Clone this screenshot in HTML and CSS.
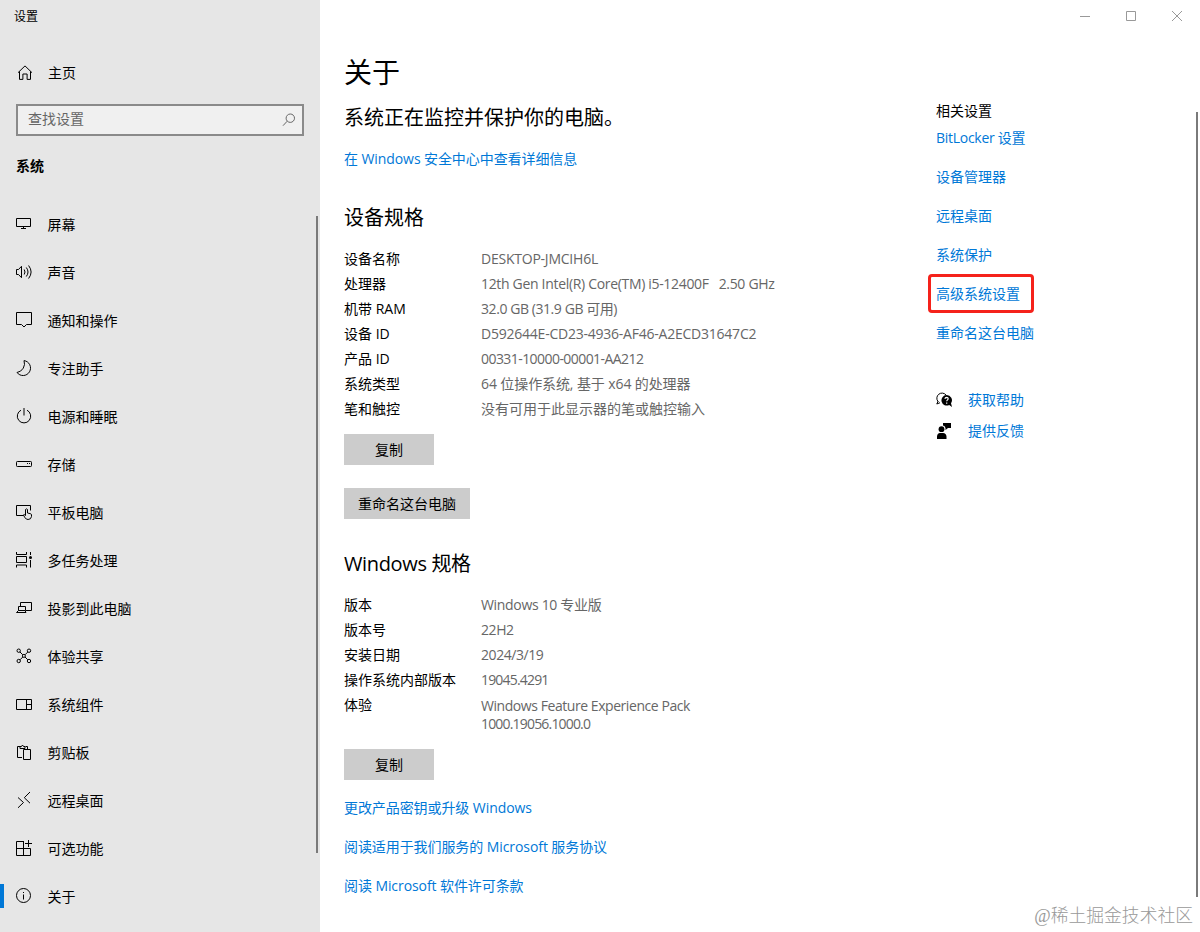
FILE: index.html
```html
<!DOCTYPE html>
<html lang="zh-CN">
<head>
    <meta charset="UTF-8">
    <title>设置</title>
    <link rel="stylesheet" href="styles.css">
</head>
<body>

<div class="window">
    <div class="side">
        <div class="side-title">设置</div>
        <div class="home">
            <svg class="icon" viewBox="0 0 16 16"><path d="M1 7.7 8 .9l7 6.8M2.5 6.5v7.9h3.4V9h4.2v5.4h3.4V6.5"/></svg>
            <span>主页</span>
        </div>
        <div class="search">
            <span>查找设置</span>
            <svg class="search-icon" viewBox="0 0 14 14"><circle cx="8.3" cy="5.2" r="4.2"/><path d="M5.2 8.2 1 12.7"/></svg>
        </div>
        <div class="group">系统</div>
        <ul class="nav">
            <li><svg class="icon" viewBox="0 0 16 16"><path d="M.5 2.5h14v8H.5zM7.5 10.500v2M5 12.500h5"/></svg><span>屏幕</span></li>
            <li><svg class="icon" viewBox="0 0 16 16"><path d="M.5 5.5h2L5.500 2.300v11.400L2.500 10.500h-2zM8.200 5.500q1.600 2.500 0 5M10.300 3.500q3.400 4.500 0 9M12.600 1.500q5 6.500 0 13"/></svg><span>声音</span></li>
            <li><svg class="icon" viewBox="0 0 16 16"><path d="M.5.5h15v12h-5L8 15l-2.500-2.500h-5z"/></svg><span>通知和操作</span></li>
            <li><svg class="icon" viewBox="0 0 16 16"><path d="M8 .6A7.500 7.500 0 1 1 1 12.500 9 9 0 0 0 8 .6z"/></svg><span>专注助手</span></li>
            <li><svg class="icon" viewBox="0 0 16 16"><path d="M5 2.200a6.700 6.700 0 1 0 6 0M8 0v7.500"/></svg><span>电源和睡眠</span></li>
            <li><svg class="icon" viewBox="0 0 16 16"><rect x=".5" y="5.500" width="15" height="5" rx=".8"/><path d="M11 7.500h1M13 7.500h1"/></svg><span>存储</span></li>
            <li><svg class="icon" viewBox="0 0 16 16"><path d="M7 11.500H.500V1.500h14v5M9.500 11.500V5.500q1-1.300 2 0v3.500l3 .7q1 .3 1 1.300v1.500q-.4 3-3.400 3-2 0-3-1.700L7.300 11q.7-1.200 2.200.5"/></svg><span>平板电脑</span></li>
            <li><svg class="icon" viewBox="0 0 16 16"><path d="M.500 0v2.500h10V0M.500 15.500v-2.500h10v2.500M.500 4.500h10v6H.500zM14.500 0v3M14.500 8v7.500"/><circle class="solid" cx="14.500" cy="5.500" r="1.500"/></svg><span>多任务处理</span></li>
            <li><svg class="icon" viewBox="0 0 16 16"><path d="M4.500 6V2.500h11v8H10M2.500 6.500h7v4h-7zM2.500 10.500.500 12.500h9.500l-1-2"/></svg><span>投影到此电脑</span></li>
            <li><svg class="icon" viewBox="0 0 16 16"><circle cx="2.700" cy="2.700" r="1.700"/><circle cx="13" cy="2.700" r="1.700"/><circle cx="2.700" cy="13" r="1.700"/><circle cx="13" cy="13" r="1.700"/><circle cx="7.900" cy="7.900" r="1.500"/><path d="M4 4l2.800 2.800M11.800 4 9 6.800M4 11.800 6.800 9M11.800 11.800 9 9"/></svg><span>体验共享</span></li>
            <li><svg class="icon" viewBox="0 0 16 16"><path d="M.500 3.500h15v10H.500zM10.500 3.500v10M10.500 8.500h5"/></svg><span>系统组件</span></li>
            <li><svg class="icon" viewBox="0 0 16 16"><path d="M6 13.500H1.500v-11h3M9.500 2.500h2v3M4 4.500v-2h1.500q1-3 2 0H9v2zM7.500 5.500h7v10h-7z"/></svg><span>剪贴板</span></li>
            <li><svg class="icon" viewBox="0 0 16 16"><path d="M2 5.500 7.500 10.500 2 15.800M14 0 8.300 5.700l5.700 5.500"/></svg><span>远程桌面</span></li>
            <li><svg class="icon" viewBox="0 0 16 16"><path d="M8 1.500H.500v14h14v-7H.500M7.500 1.500v14M12.500 0v7M9 3.500h7"/></svg><span>可选功能</span></li>
            <li class="active"><svg class="icon" viewBox="0 0 16 16"><circle cx="7.500" cy="7.500" r="7"/><path d="M7.500 6.500v5M7.500 4v1"/></svg><span>关于</span></li>
        </ul>
        <div class="side-scroll"></div>
    </div>

    <div class="main">
        <h1>关于</h1>
        <p class="status">系统正在监控并保护你的电脑。</p>
        <a class="link">在 Windows 安全中心中查看详细信息</a>

        <h2>设备规格</h2>
        <dl>
            <dt>设备名称</dt><dd class="name">DESKTOP-JMCIH6L</dd>
            <dt>处理器</dt><dd class="cpu">12th Gen Intel(R) Core(TM) i5-12400F &nbsp; 2.50 GHz</dd>
            <dt>机带 RAM</dt><dd class="ram">32.0 GB (31.9 GB 可用)</dd>
            <dt>设备 ID</dt><dd class="name">D592644E-CD23-4936-AF46-A2ECD31647C2</dd>
            <dt>产品 ID</dt><dd class="product">00331-10000-00001-AA212</dd>
            <dt>系统类型</dt><dd class="type">64 位操作系统, 基于 x64 的处理器</dd>
            <dt>笔和触控</dt><dd>没有可用于此显示器的笔或触控输入</dd>
        </dl>
        <button class="btn copy">复制</button>
        <button class="btn rename">重命名这台电脑</button>

        <h2 class="win">Windows 规格</h2>
        <dl>
            <dt>版本</dt><dd class="cpu">Windows 10 专业版</dd>
            <dt>版本号</dt><dd class="ram">22H2</dd>
            <dt>安装日期</dt><dd class="ram">2024/3/19</dd>
            <dt>操作系统内部版本</dt><dd class="build">19045.4291</dd>
            <dt>体验</dt><dd class="pack">Windows Feature Experience Pack<br><span class="build">1000.19056.1000.0</span></dd>
        </dl>
        <button class="btn copy">复制</button>
        <div class="links">
            <a class="link">更改产品密钥或升级 Windows</a>
            <a class="link">阅读适用于我们服务的 Microsoft 服务协议</a>
            <a class="link">阅读 Microsoft 软件许可条款</a>
        </div>
    </div>

    <div class="related">
        <div class="caption">
            <svg viewBox="0 0 10 10"><path d="M0 5.500h10"/></svg>
            <svg viewBox="0 0 10 10"><path d="M.500.500h9v9h-9z"/></svg>
            <svg viewBox="0 0 10 10"><path d="M0 0l10 10M10 0 0 10"/></svg>
        </div>
        <h3>相关设置</h3>
        <div class="related-links">
            <a class="link bitlocker">BitLocker 设置</a>
            <a class="link">设备管理器</a>
            <a class="link">远程桌面</a>
            <a class="link">系统保护</a>
            <a class="link marked">高级系统设置</a>
            <a class="link">重命名这台电脑</a>
        </div>
        <div class="help">
            <svg viewBox="0 0 16 16"><path class="line" d="M2 9.500A5 5 0 1 1 10 3M2.200 9 .800 12 4 10.700"/><path d="M10.500 3a5.300 5.300 0 1 0 2.700 10l2.800 2-1-3.700A5.300 5.300 0 0 0 10.500 3z"/><path class="mark" d="M8.900 6.800q.2-1.400 1.700-1.400 1.600.1 1.600 1.400c0 1-1.500 1.200-1.500 2.500M10.700 10.500v1.200"/></svg>
            <a class="link">获取帮助</a>
        </div>
        <div class="help">
            <svg viewBox="0 0 16 16"><circle cx="5.500" cy="6.200" r="2.900"/><path d="M1 16v-2.500Q1.300 10 4 10h3q3.200 0 3.500 3.500V16zM7 0h8v5h-3L9.500 7V5Q9 2.500 7 2.500z"/></svg>
            <a class="link">提供反馈</a>
        </div>
    </div>
    <div class="main-scroll"></div>
    <div class="watermark"><span>@</span>稀土掘金技术社区</div>
</div>

</body>
</html>
```
FILE: styles.css
```css
*{
    margin: 0;
    padding: 0;
    box-sizing: border-box;
}
body{
    font: 14px/20px "Open Sans", "Noto Sans CJK SC", sans-serif;
    color: #000;
    background: #fff;
}
.window{
    width: 1200px;
    height: 932px;
    display: flex;
    position: relative;
    overflow: hidden;
}
svg{
    flex: none;
    fill: none;
    stroke: #000;
}

/* left navigation */
.side{
    width: 320px;
    background: #e6e6e6;
    position: relative;
}
.side-title{
    padding: 7px 0 0 14px;
    font-size: 12px;
}
.home{
    height: 20px;
    margin-top: 36px;
    padding-left: 17px;
    display: flex;
    align-items: center;
    gap: 15px;
}
.icon{
    width: 16px;
    height: 16px;
}
.icon .solid{
    fill: #000;
    stroke: none;
}
.search{
    height: 32px;
    margin: 21px 16px 0;
    padding: 0 6px 2px 10px;
    border: 2px solid #8a8a8a;
    background: #f0f0f0;
    color: #666;
    display: flex;
    justify-content: space-between;
    align-items: center;
}
.search-icon{
    width: 14px;
    height: 14px;
    margin-top: 2px;
    stroke: #666;
}
.group{
    margin: 20px 0 0 16px;
    font-weight: bold;
}
.nav{
    margin-top: 24px;
    list-style: none;
}
.nav li{
    height: 48px;
    padding-left: 16px;
    display: flex;
    align-items: center;
    gap: 15.5px;
}
.nav span{
    padding-top: 1px;
}
.nav .active{
    padding-left: 12px;
    border-left: 4px solid #0078d7;
    border-image: linear-gradient(transparent 25%, #0078d7 25%, #0078d7 75%, transparent 75%) 0 0 0 4;
}
.side-scroll, .main-scroll{
    width: 2px;
    background: #7a7a7a;
    position: absolute;
}
.side-scroll{
    height: 637px;
    top: 216px;
    right: 2px;
}
.main-scroll{
    height: 785px;
    top: 112px;
    right: 2px;
}

/* page content */
.main{
    width: 592px;
    padding: 54px 0 0 24px;
}
h1{
    font-size: 28px;
    line-height: 36px;
    font-weight: normal;
}
.status{
    margin: 14px 0 17px;
    font-size: 20px;
    line-height: 28px;
}
.link{
    display: block;
    color: #0078d7;
    letter-spacing: -.08px;
}
h2{
    margin: 35px 0 14px;
    font-size: 20px;
    line-height: 28px;
    font-weight: normal;
}
.win{
    margin-top: 31px;
    letter-spacing: -.35px;
}
dl{
    display: grid;
    grid-template-columns: 137px 1fr;
    line-height: 25px;
}
dd{
    color: #666;
}
.name{
    letter-spacing: -.23px;
}
.cpu{
    letter-spacing: -.32px;
}
.ram{
    letter-spacing: -.43px;
}
.product{
    letter-spacing: -.56px;
}
.type{
    letter-spacing: -.1px;
}
.pack{
    padding-top: 5px;
    line-height: 18px;
    letter-spacing: -.44px;
}
.build{
    letter-spacing: -.82px;
}
.btn{
    display: block;
    height: 31px;
    border: none;
    background: #ccc;
    font: inherit;
}
.copy{
    width: 90px;
    margin-top: 13px;
}
dl:last-of-type + .copy{
    margin-top: 16px;
}
.rename{
    width: 126px;
    margin-top: 23px;
}
.links{
    margin-top: 18px;
    display: grid;
    gap: 19px;
}

/* right column */
.related{
    flex: 1;
    padding-left: 24px;
}
.caption{
    height: 32px;
    padding-right: 18px;
    display: flex;
    justify-content: flex-end;
    align-items: center;
    gap: 36px;
}
.caption svg{
    width: 10px;
    height: 10px;
    stroke: #999;
}
h3{
    margin-top: 69px;
    font-size: 14px;
    font-weight: normal;
}
.related-links{
    margin: 7px 0 47px;
    display: grid;
    gap: 19px;
    justify-items: start;
}
.related .link{
    letter-spacing: 0;
}
.related .bitlocker{
    letter-spacing: -.28px;
}
.marked{
    margin: -10px -8px -9px;
    padding: 7px 11px 6px 5px;
    border: 3px solid #f5221b;
    border-radius: 4px;
}
.help{
    margin-bottom: 11px;
    display: flex;
    align-items: center;
    gap: 16px;
}
.help svg{
    width: 16px;
    height: 16px;
    fill: #000;
    stroke: none;
}
.help .line{
    fill: none;
    stroke: #000;
}
.help .mark{
    fill: none;
    stroke: #fff;
    stroke-width: 1.2;
}
.watermark{
    position: absolute;
    right: 7px;
    bottom: 4px;
    color: #999;
    font: 300 17.8px/24px "Noto Sans CJK SC", sans-serif;
}
.watermark span{
    font-family: "Liberation Serif", serif;
}
```
